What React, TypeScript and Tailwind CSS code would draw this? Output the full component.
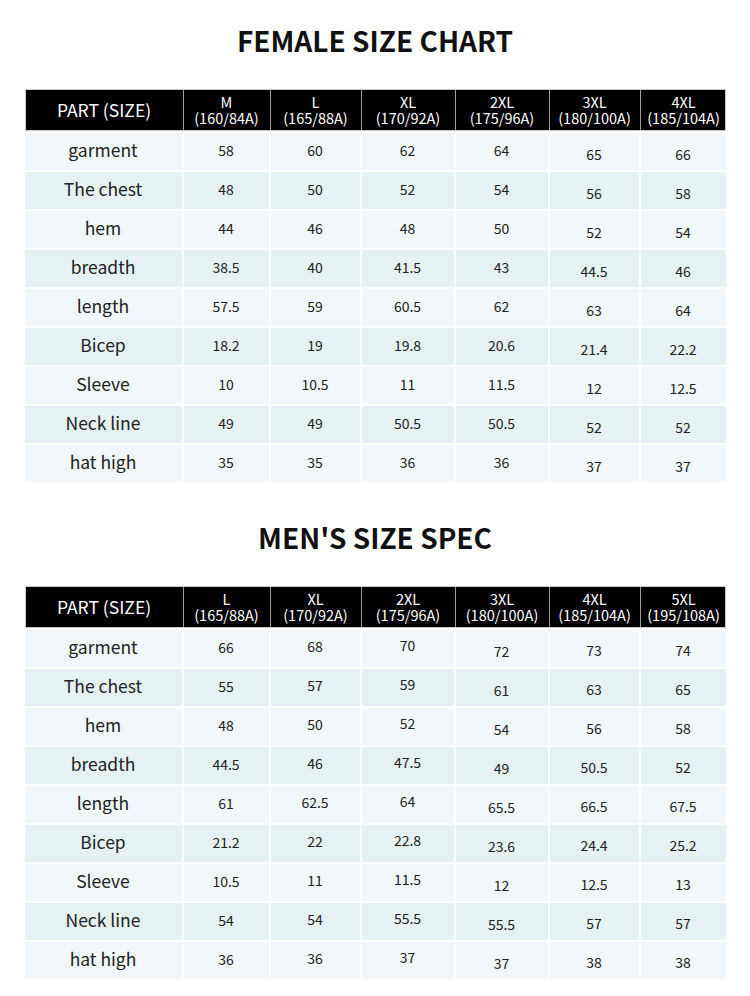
const colWidths = [
  "w-[157px]",
  "w-[87px]",
  "w-[91px]",
  "w-[94px]",
  "w-[94px]",
  "w-[91px]",
  "w-[87px]",
];

interface Chart {
  title: string;
  sizes: [string, string][];
  rows: [string, string[]][];
  // small vertical nudges per value column, like the source image
  shift: string[];
}

const female: Chart = {
  title: "FEMALE SIZE CHART",
  sizes: [
    ["M", "(160/84A)"],
    ["L", "(165/88A)"],
    ["XL", "(170/92A)"],
    ["2XL", "(175/96A)"],
    ["3XL", "(180/100A)"],
    ["4XL", "(185/104A)"],
  ],
  rows: [
    ["garment", ["58", "60", "62", "64", "65", "66"]],
    ["The chest", ["48", "50", "52", "54", "56", "58"]],
    ["hem", ["44", "46", "48", "50", "52", "54"]],
    ["breadth", ["38.5", "40", "41.5", "43", "44.5", "46"]],
    ["length", ["57.5", "59", "60.5", "62", "63", "64"]],
    ["Bicep", ["18.2", "19", "19.8", "20.6", "21.4", "22.2"]],
    ["Sleeve", ["10", "10.5", "11", "11.5", "12", "12.5"]],
    ["Neck line", ["49", "49", "50.5", "50.5", "52", "52"]],
    ["hat high", ["35", "35", "36", "36", "37", "37"]],
  ],
  shift: ["pt-[7px]", "pt-[7px]", "pt-[7px]", "pt-[7px]", "pt-[11px]", "pt-[11px]"],
};

const men: Chart = {
  title: "MEN'S SIZE SPEC",
  sizes: [
    ["L", "(165/88A)"],
    ["XL", "(170/92A)"],
    ["2XL", "(175/96A)"],
    ["3XL", "(180/100A)"],
    ["4XL", "(185/104A)"],
    ["5XL", "(195/108A)"],
  ],
  rows: [
    ["garment", ["66", "68", "70", "72", "73", "74"]],
    ["The chest", ["55", "57", "59", "61", "63", "65"]],
    ["hem", ["48", "50", "52", "54", "56", "58"]],
    ["breadth", ["44.5", "46", "47.5", "49", "50.5", "52"]],
    ["length", ["61", "62.5", "64", "65.5", "66.5", "67.5"]],
    ["Bicep", ["21.2", "22", "22.8", "23.6", "24.4", "25.2"]],
    ["Sleeve", ["10.5", "11", "11.5", "12", "12.5", "13"]],
    ["Neck line", ["54", "54", "55.5", "55.5", "57", "57"]],
    ["hat high", ["36", "36", "37", "37", "38", "38"]],
  ],
  shift: ["pt-[7px]", "pt-[6px]", "pt-[5px]", "pt-[11px]", "pt-[10px]", "pt-[10px]"],
};

const SizeTable = ({ chart }: { chart: Chart }) => (
  <section className="flex flex-col items-center">
    <h2 className="h-[89px] pt-[20px] text-[28px] font-bold text-[#111] leading-[40px]">
      {chart.title}
    </h2>
    <div className="w-[701px]">
      <div className="flex h-[42px] bg-black border border-[#c8c8c8] text-white">
        <div
          className={`${colWidths[0]} shrink-0 flex items-center justify-center text-[17.5px]`}
        >
          PART (SIZE)
        </div>
        {chart.sizes.map(([size, spec], i) => (
          <div
            key={size}
            className={`${colWidths[i + 1]} shrink-0 flex flex-col items-center justify-center border-l border-[#9a9a9a] text-[14.5px] leading-[16px]`}
          >
            <span>{size}</span>
            <span>{spec}</span>
          </div>
        ))}
      </div>
      {chart.rows.map(([part, values], r) => (
        <div
          key={part}
          className={`flex h-[39px] border-t-2 border-white text-[#222] ${
            r % 2 === 0 ? "bg-[#f1f7fa]" : "bg-[#e5f1f3]"
          }`}
        >
          <div
            className={`${colWidths[0]} shrink-0 flex items-center justify-center text-[17.5px] pb-[2px]`}
          >
            {part}
          </div>
          {values.map((v, i) => (
            <div
              key={i}
              className={`${colWidths[i + 1]} shrink-0 border-l-2 border-white text-center text-[14px] leading-[20px] ${chart.shift[i]}`}
            >
              {v}
            </div>
          ))}
        </div>
      ))}
    </div>
  </section>
);

export default function App() {
  return (
    <main
      className="w-[750px] h-[996px] bg-white overflow-hidden"
      style={{ fontFamily: '"Noto Sans CJK SC", "Noto Sans", sans-serif' }}
    >
      <SizeTable chart={female} />
      <div className="h-[15px]" />
      <SizeTable chart={men} />
    </main>
  );
}
